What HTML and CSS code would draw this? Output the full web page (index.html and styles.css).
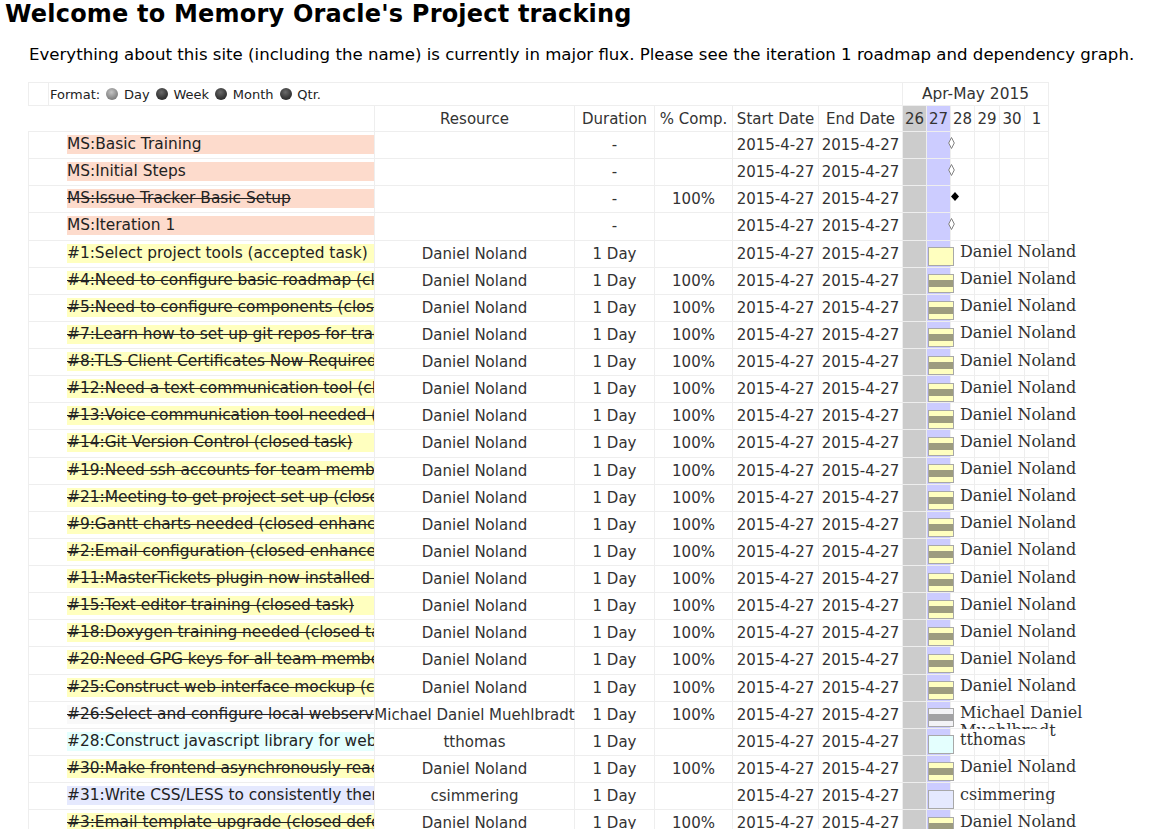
FILE: index.html
```html
<!DOCTYPE html>
<html>
<head>
<meta charset="utf-8">
<title>Memory Oracle Project tracking</title>
<link rel="stylesheet" href="styles.css">
</head>
<body>
<h1 class="title">Welcome to Memory Oracle's Project tracking</h1>
<p class="intro">Everything about this site (including the name) is currently in major flux. Please see the iteration 1 roadmap and dependency graph.</p>

<div class="gantt">
  <div class="frow">
    <div class="cell blank"></div>
    <div class="cell fmt">Format: <span class="radio on"></span> Day <span class="radio"></span> Week <span class="radio"></span> Month <span class="radio"></span> Qtr.</div>
    <div class="cell month">Apr-May 2015</div>
  </div>
  <div class="row head">
    <div class="cell name"></div>
    <div class="cell">Resource</div>
    <div class="cell">Duration</div>
    <div class="cell">% Comp.</div>
    <div class="cell">Start Date</div>
    <div class="cell">End Date</div>
    <div class="chart"><i class="d d26">26</i><i class="d d27">27</i><i class="d">28</i><i class="d">29</i><i class="d">30</i><i class="d">1</i></div>
  </div>

  <div class="row">
    <div class="cell name"><div class="nm pink">MS:Basic Training</div></div>
    <div class="cell"></div><div class="cell">-</div><div class="cell"></div>
    <div class="cell">2015-4-27</div><div class="cell">2015-4-27</div>
    <div class="chart"><i class="d d26"></i><i class="d d27"></i><i class="d"></i><i class="d"></i><i class="d"></i><i class="d"></i>
      <svg class="mso" width="7" height="12" viewBox="0 0 7 12"><path d="M3.5 0.5 L6.3 6 L3.5 11.5 L0.7 6 Z" fill="#fff" stroke="#808080" stroke-width="1"/></svg></div>
  </div>
  <div class="row">
    <div class="cell name"><div class="nm pink">MS:Initial Steps</div></div>
    <div class="cell"></div><div class="cell">-</div><div class="cell"></div>
    <div class="cell">2015-4-27</div><div class="cell">2015-4-27</div>
    <div class="chart"><i class="d d26"></i><i class="d d27"></i><i class="d"></i><i class="d"></i><i class="d"></i><i class="d"></i>
      <svg class="mso" width="7" height="12" viewBox="0 0 7 12"><path d="M3.5 0.5 L6.3 6 L3.5 11.5 L0.7 6 Z" fill="#fff" stroke="#808080" stroke-width="1"/></svg></div>
  </div>
  <div class="row">
    <div class="cell name"><div class="nm pink done">MS:Issue Tracker Basic Setup</div></div>
    <div class="cell"></div><div class="cell">-</div><div class="cell">100%</div>
    <div class="cell">2015-4-27</div><div class="cell">2015-4-27</div>
    <div class="chart"><i class="d d26"></i><i class="d d27"></i><i class="d"></i><i class="d"></i><i class="d"></i><i class="d"></i>
      <svg class="msc" width="8" height="9" viewBox="0 0 8 9"><path d="M4 0 L8 4.5 L4 9 L0 4.5 Z" fill="#000"/></svg></div>
  </div>
  <div class="row">
    <div class="cell name"><div class="nm pink">MS:Iteration 1</div></div>
    <div class="cell"></div><div class="cell">-</div><div class="cell"></div>
    <div class="cell">2015-4-27</div><div class="cell">2015-4-27</div>
    <div class="chart"><i class="d d26"></i><i class="d d27"></i><i class="d"></i><i class="d"></i><i class="d"></i><i class="d"></i>
      <svg class="mso" width="7" height="12" viewBox="0 0 7 12"><path d="M3.5 0.5 L6.3 6 L3.5 11.5 L0.7 6 Z" fill="#fff" stroke="#808080" stroke-width="1"/></svg></div>
  </div>

  <div class="row">
    <div class="cell name"><div class="nm yellow">#1:Select project tools (accepted task)</div></div>
    <div class="cell">Daniel Noland</div><div class="cell">1 Day</div><div class="cell"></div>
    <div class="cell">2015-4-27</div><div class="cell">2015-4-27</div>
    <div class="chart"><i class="d d26"></i><i class="d d27"></i><i class="d"></i><i class="d"></i><i class="d"></i><i class="d"></i>
      <div class="bar yellow"></div><div class="label">Daniel Noland</div></div>
  </div>
  <div class="row">
    <div class="cell name"><div class="nm yellow done">#4:Need to configure basic roadmap (closed task)</div></div>
    <div class="cell">Daniel Noland</div><div class="cell">1 Day</div><div class="cell">100%</div>
    <div class="cell">2015-4-27</div><div class="cell">2015-4-27</div>
    <div class="chart"><i class="d d26"></i><i class="d d27"></i><i class="d"></i><i class="d"></i><i class="d"></i><i class="d"></i>
      <div class="bar yellow"><div class="band"></div></div><div class="label">Daniel Noland</div></div>
  </div>
  <div class="row">
    <div class="cell name"><div class="nm yellow done">#5:Need to configure components (closed task)</div></div>
    <div class="cell">Daniel Noland</div><div class="cell">1 Day</div><div class="cell">100%</div>
    <div class="cell">2015-4-27</div><div class="cell">2015-4-27</div>
    <div class="chart"><i class="d d26"></i><i class="d d27"></i><i class="d"></i><i class="d"></i><i class="d"></i><i class="d"></i>
      <div class="bar yellow"><div class="band"></div></div><div class="label">Daniel Noland</div></div>
  </div>
  <div class="row">
    <div class="cell name"><div class="nm yellow done">#7:Learn how to set up git repos for trac (closed task)</div></div>
    <div class="cell">Daniel Noland</div><div class="cell">1 Day</div><div class="cell">100%</div>
    <div class="cell">2015-4-27</div><div class="cell">2015-4-27</div>
    <div class="chart"><i class="d d26"></i><i class="d d27"></i><i class="d"></i><i class="d"></i><i class="d"></i><i class="d"></i>
      <div class="bar yellow"><div class="band"></div></div><div class="label">Daniel Noland</div></div>
  </div>
  <div class="row">
    <div class="cell name"><div class="nm yellow done">#8:TLS Client Certificates Now Required (closed task)</div></div>
    <div class="cell">Daniel Noland</div><div class="cell">1 Day</div><div class="cell">100%</div>
    <div class="cell">2015-4-27</div><div class="cell">2015-4-27</div>
    <div class="chart"><i class="d d26"></i><i class="d d27"></i><i class="d"></i><i class="d"></i><i class="d"></i><i class="d"></i>
      <div class="bar yellow"><div class="band"></div></div><div class="label">Daniel Noland</div></div>
  </div>
  <div class="row">
    <div class="cell name"><div class="nm yellow done">#12:Need a text communication tool (closed task)</div></div>
    <div class="cell">Daniel Noland</div><div class="cell">1 Day</div><div class="cell">100%</div>
    <div class="cell">2015-4-27</div><div class="cell">2015-4-27</div>
    <div class="chart"><i class="d d26"></i><i class="d d27"></i><i class="d"></i><i class="d"></i><i class="d"></i><i class="d"></i>
      <div class="bar yellow"><div class="band"></div></div><div class="label">Daniel Noland</div></div>
  </div>
  <div class="row">
    <div class="cell name"><div class="nm yellow done">#13:Voice communication tool needed (closed task)</div></div>
    <div class="cell">Daniel Noland</div><div class="cell">1 Day</div><div class="cell">100%</div>
    <div class="cell">2015-4-27</div><div class="cell">2015-4-27</div>
    <div class="chart"><i class="d d26"></i><i class="d d27"></i><i class="d"></i><i class="d"></i><i class="d"></i><i class="d"></i>
      <div class="bar yellow"><div class="band"></div></div><div class="label">Daniel Noland</div></div>
  </div>
  <div class="row">
    <div class="cell name"><div class="nm yellow done">#14:Git Version Control (closed task)</div></div>
    <div class="cell">Daniel Noland</div><div class="cell">1 Day</div><div class="cell">100%</div>
    <div class="cell">2015-4-27</div><div class="cell">2015-4-27</div>
    <div class="chart"><i class="d d26"></i><i class="d d27"></i><i class="d"></i><i class="d"></i><i class="d"></i><i class="d"></i>
      <div class="bar yellow"><div class="band"></div></div><div class="label">Daniel Noland</div></div>
  </div>
  <div class="row">
    <div class="cell name"><div class="nm yellow done">#19:Need ssh accounts for team members (closed task)</div></div>
    <div class="cell">Daniel Noland</div><div class="cell">1 Day</div><div class="cell">100%</div>
    <div class="cell">2015-4-27</div><div class="cell">2015-4-27</div>
    <div class="chart"><i class="d d26"></i><i class="d d27"></i><i class="d"></i><i class="d"></i><i class="d"></i><i class="d"></i>
      <div class="bar yellow"><div class="band"></div></div><div class="label">Daniel Noland</div></div>
  </div>
  <div class="row">
    <div class="cell name"><div class="nm yellow done">#21:Meeting to get project set up (closed task)</div></div>
    <div class="cell">Daniel Noland</div><div class="cell">1 Day</div><div class="cell">100%</div>
    <div class="cell">2015-4-27</div><div class="cell">2015-4-27</div>
    <div class="chart"><i class="d d26"></i><i class="d d27"></i><i class="d"></i><i class="d"></i><i class="d"></i><i class="d"></i>
      <div class="bar yellow"><div class="band"></div></div><div class="label">Daniel Noland</div></div>
  </div>
  <div class="row">
    <div class="cell name"><div class="nm yellow done">#9:Gantt charts needed (closed enhancement)</div></div>
    <div class="cell">Daniel Noland</div><div class="cell">1 Day</div><div class="cell">100%</div>
    <div class="cell">2015-4-27</div><div class="cell">2015-4-27</div>
    <div class="chart"><i class="d d26"></i><i class="d d27"></i><i class="d"></i><i class="d"></i><i class="d"></i><i class="d"></i>
      <div class="bar yellow"><div class="band"></div></div><div class="label">Daniel Noland</div></div>
  </div>
  <div class="row">
    <div class="cell name"><div class="nm yellow done">#2:Email configuration (closed enhancement)</div></div>
    <div class="cell">Daniel Noland</div><div class="cell">1 Day</div><div class="cell">100%</div>
    <div class="cell">2015-4-27</div><div class="cell">2015-4-27</div>
    <div class="chart"><i class="d d26"></i><i class="d d27"></i><i class="d"></i><i class="d"></i><i class="d"></i><i class="d"></i>
      <div class="bar yellow"><div class="band"></div></div><div class="label">Daniel Noland</div></div>
  </div>
  <div class="row">
    <div class="cell name"><div class="nm yellow done">#11:MasterTickets plugin now installed (closed enhancement)</div></div>
    <div class="cell">Daniel Noland</div><div class="cell">1 Day</div><div class="cell">100%</div>
    <div class="cell">2015-4-27</div><div class="cell">2015-4-27</div>
    <div class="chart"><i class="d d26"></i><i class="d d27"></i><i class="d"></i><i class="d"></i><i class="d"></i><i class="d"></i>
      <div class="bar yellow"><div class="band"></div></div><div class="label">Daniel Noland</div></div>
  </div>
  <div class="row">
    <div class="cell name"><div class="nm yellow done">#15:Text editor training (closed task)</div></div>
    <div class="cell">Daniel Noland</div><div class="cell">1 Day</div><div class="cell">100%</div>
    <div class="cell">2015-4-27</div><div class="cell">2015-4-27</div>
    <div class="chart"><i class="d d26"></i><i class="d d27"></i><i class="d"></i><i class="d"></i><i class="d"></i><i class="d"></i>
      <div class="bar yellow"><div class="band"></div></div><div class="label">Daniel Noland</div></div>
  </div>
  <div class="row">
    <div class="cell name"><div class="nm yellow done">#18:Doxygen training needed (closed task)</div></div>
    <div class="cell">Daniel Noland</div><div class="cell">1 Day</div><div class="cell">100%</div>
    <div class="cell">2015-4-27</div><div class="cell">2015-4-27</div>
    <div class="chart"><i class="d d26"></i><i class="d d27"></i><i class="d"></i><i class="d"></i><i class="d"></i><i class="d"></i>
      <div class="bar yellow"><div class="band"></div></div><div class="label">Daniel Noland</div></div>
  </div>
  <div class="row">
    <div class="cell name"><div class="nm yellow done">#20:Need GPG keys for all team members (closed task)</div></div>
    <div class="cell">Daniel Noland</div><div class="cell">1 Day</div><div class="cell">100%</div>
    <div class="cell">2015-4-27</div><div class="cell">2015-4-27</div>
    <div class="chart"><i class="d d26"></i><i class="d d27"></i><i class="d"></i><i class="d"></i><i class="d"></i><i class="d"></i>
      <div class="bar yellow"><div class="band"></div></div><div class="label">Daniel Noland</div></div>
  </div>
  <div class="row">
    <div class="cell name"><div class="nm yellow done">#25:Construct web interface mockup (closed task)</div></div>
    <div class="cell">Daniel Noland</div><div class="cell">1 Day</div><div class="cell">100%</div>
    <div class="cell">2015-4-27</div><div class="cell">2015-4-27</div>
    <div class="chart"><i class="d d26"></i><i class="d d27"></i><i class="d"></i><i class="d"></i><i class="d"></i><i class="d"></i>
      <div class="bar yellow"><div class="band"></div></div><div class="label">Daniel Noland</div></div>
  </div>
  <div class="row">
    <div class="cell name"><div class="nm white done">#26:Select and configure local webserver (closed task)</div></div>
    <div class="cell">Michael Daniel Muehlbradt</div><div class="cell">1 Day</div><div class="cell">100%</div>
    <div class="cell">2015-4-27</div><div class="cell">2015-4-27</div>
    <div class="chart"><i class="d d26"></i><i class="d d27"></i><i class="d"></i><i class="d"></i><i class="d"></i><i class="d"></i>
      <div class="bar white"><div class="band grey"></div></div><div class="label">Michael Daniel Muehlbradt</div></div>
  </div>
  <div class="row">
    <div class="cell name"><div class="nm cyan">#28:Construct javascript library for web interface (new task)</div></div>
    <div class="cell">tthomas</div><div class="cell">1 Day</div><div class="cell"></div>
    <div class="cell">2015-4-27</div><div class="cell">2015-4-27</div>
    <div class="chart"><i class="d d26"></i><i class="d d27"></i><i class="d"></i><i class="d"></i><i class="d"></i><i class="d"></i>
      <div class="bar cyan"></div><div class="label">tthomas</div></div>
  </div>
  <div class="row">
    <div class="cell name"><div class="nm yellow done">#30:Make frontend asynchronously reactive (closed task)</div></div>
    <div class="cell">Daniel Noland</div><div class="cell">1 Day</div><div class="cell">100%</div>
    <div class="cell">2015-4-27</div><div class="cell">2015-4-27</div>
    <div class="chart"><i class="d d26"></i><i class="d d27"></i><i class="d"></i><i class="d"></i><i class="d"></i><i class="d"></i>
      <div class="bar yellow"><div class="band"></div></div><div class="label">Daniel Noland</div></div>
  </div>
  <div class="row">
    <div class="cell name"><div class="nm lav">#31:Write CSS/LESS to consistently theme the site (new task)</div></div>
    <div class="cell">csimmering</div><div class="cell">1 Day</div><div class="cell"></div>
    <div class="cell">2015-4-27</div><div class="cell">2015-4-27</div>
    <div class="chart"><i class="d d26"></i><i class="d d27"></i><i class="d"></i><i class="d"></i><i class="d"></i><i class="d"></i>
      <div class="bar lav"></div><div class="label">csimmering</div></div>
  </div>
  <div class="row">
    <div class="cell name"><div class="nm yellow done">#3:Email template upgrade (closed defect)</div></div>
    <div class="cell">Daniel Noland</div><div class="cell">1 Day</div><div class="cell">100%</div>
    <div class="cell">2015-4-27</div><div class="cell">2015-4-27</div>
    <div class="chart"><i class="d d26"></i><i class="d d27"></i><i class="d"></i><i class="d"></i><i class="d"></i><i class="d"></i>
      <div class="bar yellow"><div class="band"></div></div><div class="label">Daniel Noland</div></div>
  </div>
</div>
</body>
</html>
```

FILE: styles.css
```css
* { box-sizing: border-box; }

html, body { background: #fff; }

body {
  margin: 0;
  padding: 1px 0 0 5px;
  font-family: "DejaVu Sans", Verdana, sans-serif;
  color: #000;
}

.title {
  margin: 0;
  font-size: 24px;
  line-height: 26px;
  letter-spacing: 0.2px;
  font-weight: bold;
}

.intro {
  margin: 19px 0 0 24px;
  font-size: 16.6px;
  line-height: 18px;
}

.gantt {
  margin: 18px 0 0 23px;
  width: 1021px;
  font-size: 15px;
  color: #333;
}

.cell {
  display: flex;
  align-items: center;
  justify-content: center;
  white-space: nowrap;
  border-right: 1px solid #eee;
  border-bottom: 1px solid #eee;
}

/* format row */
.frow {
  display: grid;
  grid-template-columns: 21px 854px 146px;
  height: 24px;
}
.frow .cell { border-top: 1px solid #eee; }
.frow .blank { border-left: 1px solid #eee; }
.fmt {
  justify-content: flex-start;
  padding-left: 1px;
  font-size: 13px;
  color: #222;
  white-space: pre;
}
.radio {
  display: inline-block;
  width: 12px;
  height: 12px;
  border-radius: 50%;
  margin: 0 1.5px 0 2px;
  background: radial-gradient(circle at 45% 35%, #6a6a6a 0%, #3a3a3a 55%, #1e1e1e 100%);
}
.radio.on {
  background: radial-gradient(circle at 45% 35%, #c4c4c4 0%, #8e8e8e 55%, #666 100%);
}
.month { color: #333; font-size: 15.4px; }

/* table rows */
.row {
  display: grid;
  grid-template-columns: 347px 200px 80px 78px 86px 84px 146px;
  height: 27.125px;
}
.row.head { height: 26px; }

.name {
  border-left: 1px solid #eee;
  justify-content: flex-start;
  align-items: flex-start;
  padding: 3px 0 0 38px;
  overflow: hidden;
}
.head .name { border-left: none; }

.nm {
  width: 100%;
  height: 19px;
  line-height: 19px;
  font-size: 15.4px;
  white-space: nowrap;
  overflow: hidden;
  color: #222;
}
.nm.done { text-decoration: line-through; }

.pink { background: #fddbcc; }
.yellow { background: #ffffbf; }
.white { background: #f9f9f9; }
.cyan { background: #e4fffe; }
.lav { background: #e5e9fe; }

/* chart area */
.chart {
  position: relative;
  display: grid;
  grid-template-columns: 24px 24px 24px 25px 25px 24px;
}
.d {
  font-style: normal;
  display: flex;
  align-items: center;
  justify-content: center;
  background: #fff;
  border-right: 1px solid #eee;
  border-bottom: 1px solid #eee;
}
.d.d26 { background: #cccccc; }
.d.d27 { background: #ccccff; }

.mso { position: absolute; left: 45px; top: 5px; }
.msc { position: absolute; left: 48px; top: 6px; }

.bar {
  position: absolute;
  left: 25px;
  top: 6.5px;
  width: 26px;
  height: 19px;
  border: 1px solid #a8a8a8;
}
.bar.white { background: #f3f3f6; }
.band {
  margin-top: 5px;
  height: 7px;
  background: #9d9c7f;
}
.band.grey { background: #a2a2a4; }

.label {
  position: absolute;
  left: 57px;
  top: 2.5px;
  width: 150px;
  font-family: "DejaVu Serif", Georgia, serif;
  font-size: 16px;
  line-height: 18px;
  color: #333;
}
```
